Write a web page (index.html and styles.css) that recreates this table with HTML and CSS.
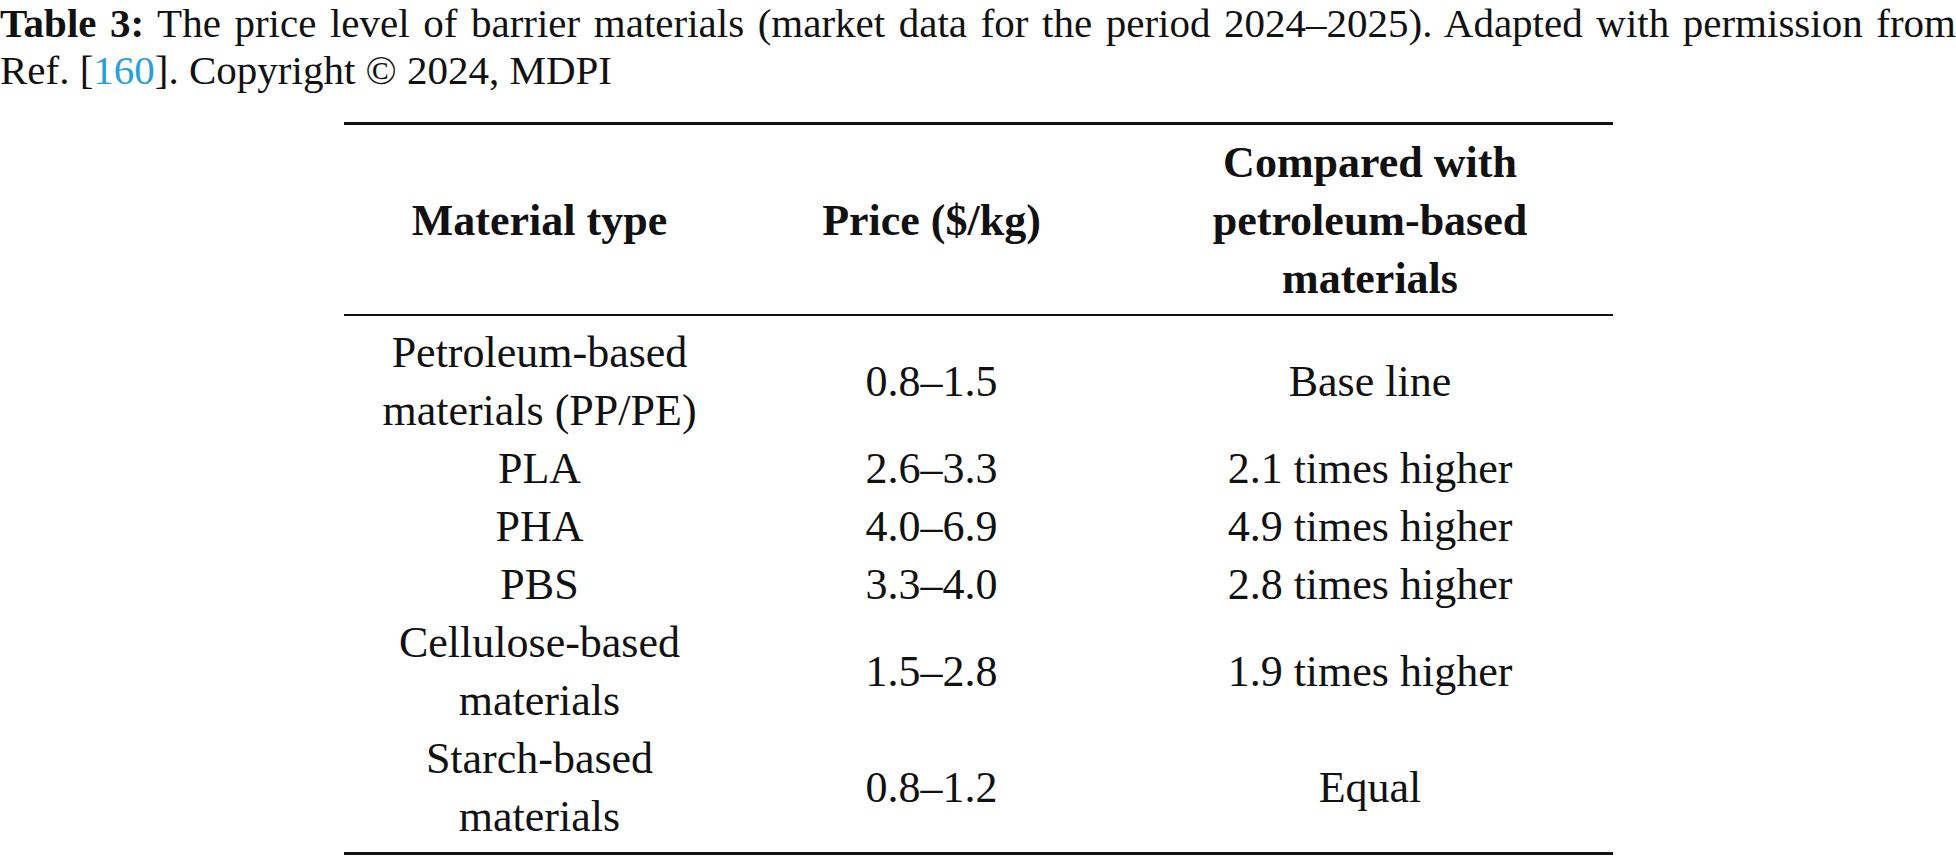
FILE: index.html
```html
<!DOCTYPE html>
<html lang="en">
<head>
<meta charset="utf-8">
<title>Table 3</title>
<link rel="stylesheet" href="styles.css">
</head>
<body>
<p class="caption"><b>Table 3:</b> The price level of barrier materials (market data for the period 2024–2025). Adapted with permission from Ref. [<a class="ref" href="#">160</a>]. Copyright © 2024, MDPI</p>
<table class="data">
  <colgroup>
    <col class="c1"><col class="c2"><col class="c3">
  </colgroup>
  <thead>
    <tr>
      <th>Material type</th>
      <th>Price ($/kg)</th>
      <th>Compared with<br>petroleum-based<br>materials</th>
    </tr>
  </thead>
  <tbody>
    <tr><td>Petroleum-based<br>materials (PP/PE)</td><td>0.8–1.5</td><td>Base line</td></tr>
    <tr><td>PLA</td><td>2.6–3.3</td><td>2.1 times higher</td></tr>
    <tr><td>PHA</td><td>4.0–6.9</td><td>4.9 times higher</td></tr>
    <tr><td>PBS</td><td>3.3–4.0</td><td>2.8 times higher</td></tr>
    <tr><td>Cellulose-based<br>materials</td><td>1.5–2.8</td><td>1.9 times higher</td></tr>
    <tr><td>Starch-based<br>materials</td><td>0.8–1.2</td><td>Equal</td></tr>
  </tbody>
</table>
</body>
</html>
```
FILE: styles.css
```css
html, body {
  margin: 0;
  padding: 0;
  background: #ffffff;
}
body {
  font-family: "Liberation Serif", "Times New Roman", serif;
  color: #111111;
  overflow: hidden;
}
.caption {
  margin: 0;
  font-size: 41px;
  line-height: 47px;
  text-align: justify;
}
.caption b {
  font-weight: 700;
}
.ref {
  color: #2aa0d8;
  text-decoration: none;
}
.data {
  margin: 28px auto 0;
  width: 1269px;
  border-collapse: collapse;
  border-top: 3px solid #111111;
  border-bottom: 3px solid #111111;
  font-size: 44px;
  line-height: 58px;
}
.c1 { width: 392px; }
.c2 { width: 392px; }
.c3 { width: 485px; }
.data thead tr {
  border-bottom: 2px solid #111111;
}
.data th {
  font-weight: 700;
  text-align: center;
  vertical-align: middle;
  padding: 9px 0 6px;
}
.data td {
  text-align: center;
  vertical-align: middle;
  padding: 0;
}
.data tbody tr:first-child td {
  padding-top: 8px;
}
.data tbody tr:last-child td {
  padding-bottom: 6px;
}
```
